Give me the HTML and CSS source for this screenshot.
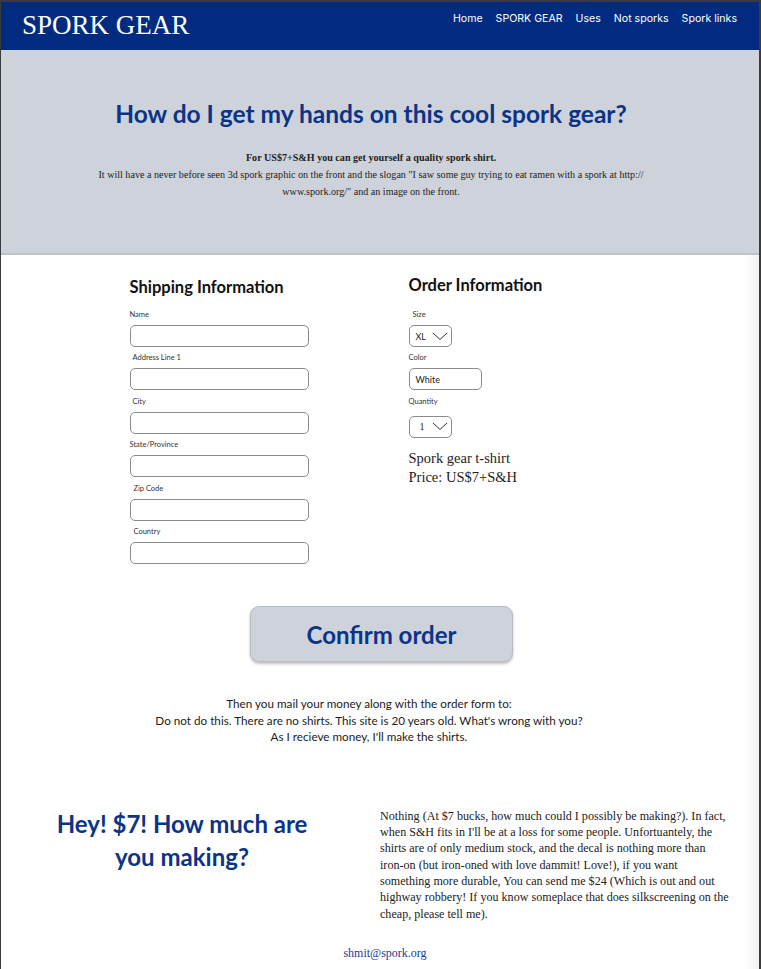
FILE: index.html
```html
<!DOCTYPE html>
<html lang="en">
<head>
    <meta charset="UTF-8">
    <meta name="viewport" content="width=device-width, initial-scale=1.0">
    <title>SPORK GEAR</title>
    <link rel="stylesheet" href="styles.css">
</head>
<body>
<div class="page">

    <!-- Barra superior -->
    <header class="topbar">
        <div class="brand">SPORK GEAR</div>
        <nav class="nav">
            <a href="#">Home</a>
            <a href="#">SPORK GEAR</a>
            <a href="#">Uses</a>
            <a href="#">Not sporks</a>
            <a href="#">Spork links</a>
        </nav>
    </header>

    <!-- Intro -->
    <section class="hero">
        <h1>How do I get my hands on this cool spork gear?</h1>
        <p class="hero-lead">For US$7+S&amp;H you can get yourself a quality spork shirt.</p>
        <p class="hero-text">It will have a never before seen 3d spork graphic on the front and the slogan "I saw some guy trying to eat ramen with a spork at http://<br>www.spork.org/" and an image on the front.</p>
    </section>

    <!-- Formulario -->
    <form class="order-form" action="#" onsubmit="return false">
        <div class="col">
            <h3 class="col-title">Shipping Information</h3>
            <label class="field-label">Name</label>
            <input class="field" type="text">
            <label class="field-label indent">Address Line 1</label>
            <input class="field" type="text">
            <label class="field-label indent">City</label>
            <input class="field" type="text">
            <label class="field-label">State/Province</label>
            <input class="field" type="text">
            <label class="field-label indent2">Zip Code</label>
            <input class="field" type="text">
            <label class="field-label indent2">Country</label>
            <input class="field" type="text">
        </div>

        <div class="col">
            <h3 class="col-title up">Order Information</h3>
            <label class="field-label indent2">Size</label>
            <div class="pick">
                <span>XL</span>
                <svg width="16" height="9" viewBox="0 0 16 9"><path d="M1 1l7 6.5L15 1" fill="none" stroke="#333" stroke-width="1"/></svg>
            </div>
            <label class="field-label">Color</label>
            <div class="pick wide"><span>White</span></div>
            <label class="field-label">Quantity</label>
            <div class="pick qty">
                <span class="serif">1</span>
                <svg width="16" height="9" viewBox="0 0 16 9"><path d="M1 1l7 6.5L15 1" fill="none" stroke="#333" stroke-width="1"/></svg>
            </div>
            <p class="product">Spork gear t-shirt<br>Price: US$7+S&amp;H</p>
        </div>
    </form>

    <div class="confirm-wrap">
        <button class="confirm" type="button">Confirm order</button>
    </div>

    <p class="mail-note">Then you mail your money along with the order form to:<br>Do not do this. There are no shirts. This site is 20 years old. What's wrong with you?<br>As I recieve money, I'll make the shirts.</p>

    <!-- Pregunta final -->
    <section class="faq">
        <h2>Hey! $7! How much are you making?</h2>
        <p>Nothing (At $7 bucks, how much could I possibly be making?). In fact,<br>
        when S&amp;H fits in I'll be at a loss for some people. Unfortuantely, the<br>
        shirts are of only medium stock, and the decal is nothing more than<br>
        iron-on (but iron-oned with love dammit! Love!), if you want<br>
        something more durable, You can send me $24 (Which is out and out<br>
        highway robbery! If you know someplace that does silkscreening on the<br>
        cheap, please tell me).</p>
    </section>

    <footer class="footer">
        <a href="#">shmit@spork.org</a>
    </footer>
</div>
</body>
</html>
```

FILE: styles.css
```css
body {
    margin: 0;
    padding: 0;
    background-color: #3b3b3d;
    font-family: "Liberation Serif", serif;
    color: #222;
}

.page {
    margin: 2px 2px 0 1px;
    background-color: #ffffff;
    box-shadow: inset -18px 0 14px -14px rgba(0, 0, 0, 0.08);
    min-height: 967px;
}

.topbar {
    background-color: #012b80;
    height: 48px;
    display: flex;
    justify-content: space-between;
    align-items: flex-start;
}

.brand {
    font-family: "Liberation Serif", serif;
    font-size: 27px;
    color: #ffffff;
    margin: 8px 0 0 21px;
}

.nav {
    display: flex;
    gap: 13px;
    margin: 10px 22px 0 0;
}

.nav a {
    font-family: Inter, "Liberation Sans", sans-serif;
    font-size: 10.6px;
    color: #ffffff;
    text-decoration: none;
}

.hero {
    background-color: #ced2da;
    border-bottom: 2px solid #bfc2ca;
    height: 205px;
    box-sizing: border-box;
    padding: 49px 18px 0 0;
    text-align: center;
}

.hero h1 {
    font-family: Lato, sans-serif;
    font-weight: bold;
    font-size: 24.5px;
    color: #0b3487;
    margin: 0 0 21px 0;
}

.hero-lead,
.hero-text {
    font-size: 10.1px;
    line-height: 17px;
    margin: 0;
    color: #222;
}

.hero-lead {
    font-weight: bold;
}

.hero-text {
    padding: 0 40px;
}

.order-form {
    display: grid;
    grid-template-columns: 279px 220px;
    justify-content: center;
    margin-top: 22px;
    padding-right: 2px;
}

.col {
    display: flex;
    flex-direction: column;
    align-items: flex-start;
}

.col-title {
    font-family: Lato, sans-serif;
    font-size: 16.5px;
    font-weight: bold;
    color: #111;
    margin: 0 0 13px 0;
}

.col-title.up {
    margin-top: -2px;
    margin-bottom: 15px;
}

.field-label {
    font-family: Lato, sans-serif;
    font-size: 7.5px;
    color: #333;
    height: 9px;
    line-height: 9px;
    margin-bottom: 6px;
}

.field-label.indent {
    padding-left: 3px;
}

.field-label.indent2 {
    padding-left: 4px;
}

.field {
    width: 179px;
    height: 22px;
    box-sizing: border-box;
    border: 1px solid #8c8c8c;
    border-radius: 5px;
    margin: 0 0 6.4px 0;
    background: #ffffff;
}

.pick {
    width: 43px;
    height: 22px;
    box-sizing: border-box;
    border: 1px solid #8c8c8c;
    border-radius: 5px;
    margin: 0 0 6.4px 0;
    display: flex;
    align-items: center;
    justify-content: space-between;
    padding: 0 3px 0 6px;
    font-family: Lato, sans-serif;
    font-size: 9px;
    color: #222;
}

.pick.wide {
    width: 73px;
}

.pick.qty {
    margin-top: 4px;
    padding-left: 10px;
}

.pick .serif {
    font-family: "Liberation Serif", serif;
    font-size: 10px;
}

.product {
    font-size: 14.5px;
    line-height: 19px;
    margin: 5px 0 0 0;
    color: #222;
}

.confirm-wrap {
    display: flex;
    justify-content: center;
    margin-top: 36px;
    padding-left: 3px;
}

.confirm {
    width: 263px;
    height: 56px;
    background-color: #ced2da;
    border: 1px solid #b8bcc4;
    border-radius: 9px;
    box-shadow: 0 2px 3px rgba(0, 0, 0, 0.25);
    font-family: Lato, sans-serif;
    font-weight: bold;
    font-size: 24px;
    color: #0b3487;
    cursor: pointer;
}

.mail-note {
    font-family: Lato, sans-serif;
    font-size: 11.7px;
    line-height: 16.5px;
    text-align: center;
    margin: 33px 22px 0 0;
    color: #222;
}

.faq {
    display: grid;
    grid-template-columns: 363px 360px;
    margin-top: 63px;
    padding-left: 16px;
}

.faq h2 {
    font-family: Lato, sans-serif;
    font-size: 24px;
    line-height: 33px;
    font-weight: bold;
    color: #0b3487;
    text-align: center;
    margin: -1px 0 0 0;
    padding: 0 67px 0 34px;
}

.faq p {
    font-size: 12.1px;
    line-height: 16.3px;
    margin: 0;
    white-space: nowrap;
    color: #222;
}

.footer {
    text-align: center;
    margin-top: 21px;
    padding-left: 10px;
}

.footer a {
    font-size: 12px;
    color: #1a3c8f;
    text-decoration: none;
}
```
